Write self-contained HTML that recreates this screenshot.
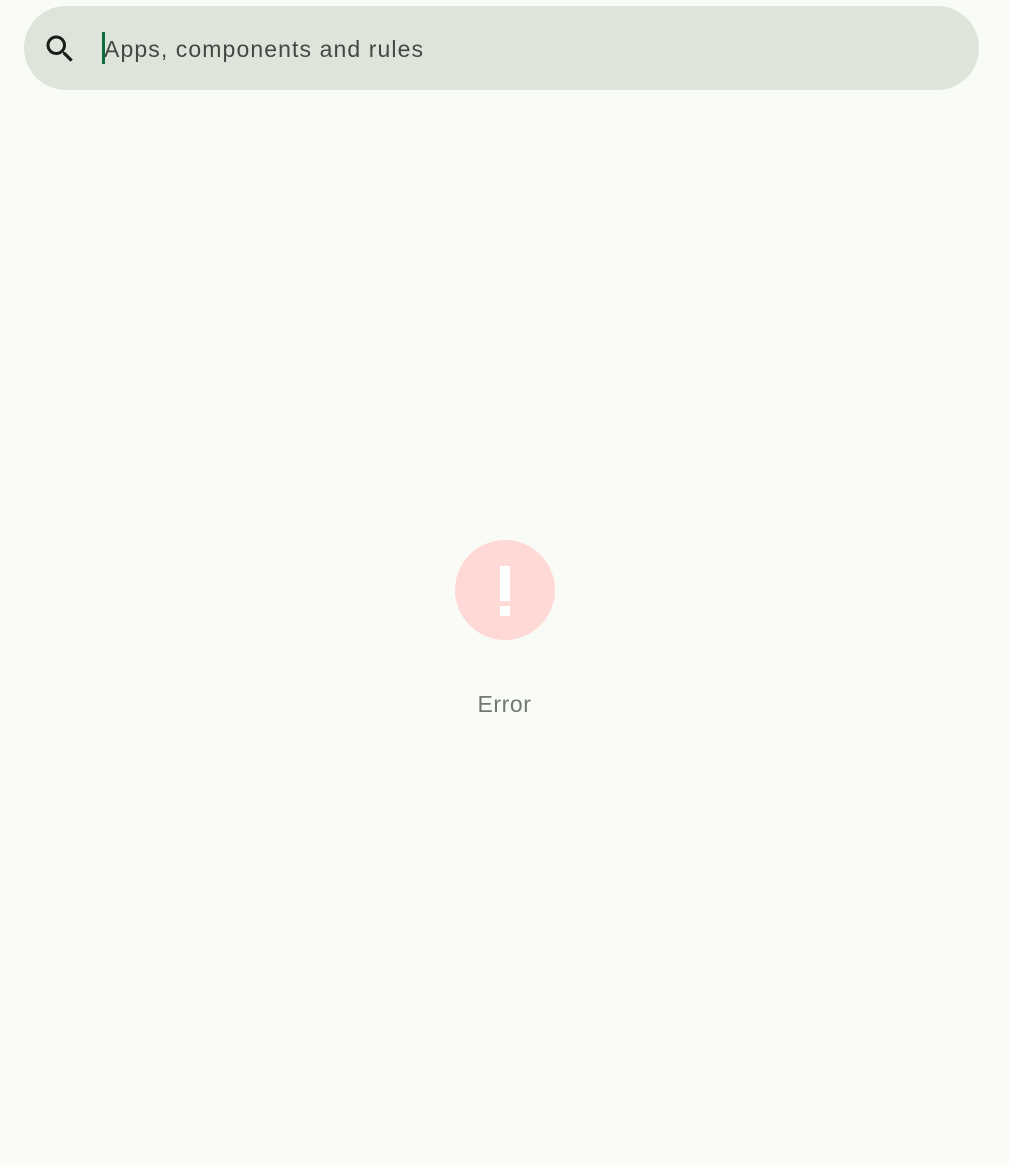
<!DOCTYPE html>
<html><head><style>
body{margin:0;width:1009px;height:1165px;background:#f9fbf6;font-family:"Liberation Sans",sans-serif;position:relative;overflow:hidden}
.bar{position:absolute;left:24px;top:6px;width:955px;height:84px;border-radius:42px;background:#dde4da}
.cur{position:absolute;left:102px;top:32px;width:3px;height:32px;background:#116d3d}
.txt{position:absolute;left:104px;top:36px;font-size:23px;color:#444845;letter-spacing:1.1px}
.circ{position:absolute;left:455px;top:540px;width:100px;height:100px;border-radius:50%;background:#ffd9d6}
.b1{position:absolute;left:500px;top:566px;width:10px;height:35px;background:#fff}
.b2{position:absolute;left:500px;top:606px;width:10px;height:10px;background:#fff}
.err{position:absolute;left:0;width:1009px;text-align:center;top:691px;font-size:23px;color:#747873;letter-spacing:0.6px}
</style></head><body>
<div class="bar"></div>
<svg style="position:absolute;left:42px;top:31px" width="36" height="36" viewBox="0 0 24 24"><path fill="#1a1c19" d="M15.5 14h-.79l-.28-.27A6.47 6.47 0 0 0 16 9.5 6.5 6.5 0 1 0 9.5 16c1.61 0 3.09-.59 4.23-1.57l.27.28v.79l5 4.99L20.49 19l-4.99-5zm-6 0C7.01 14 5 11.99 5 9.5S7.01 5 9.5 5 14 7.01 14 9.5 11.990 14 9.5 14z"/></svg>
<div class="cur"></div>
<div class="txt">Apps, components and rules</div>
<div class="circ"></div><div class="b1"></div><div class="b2"></div>
<div class="err">Error</div>
</body></html>
